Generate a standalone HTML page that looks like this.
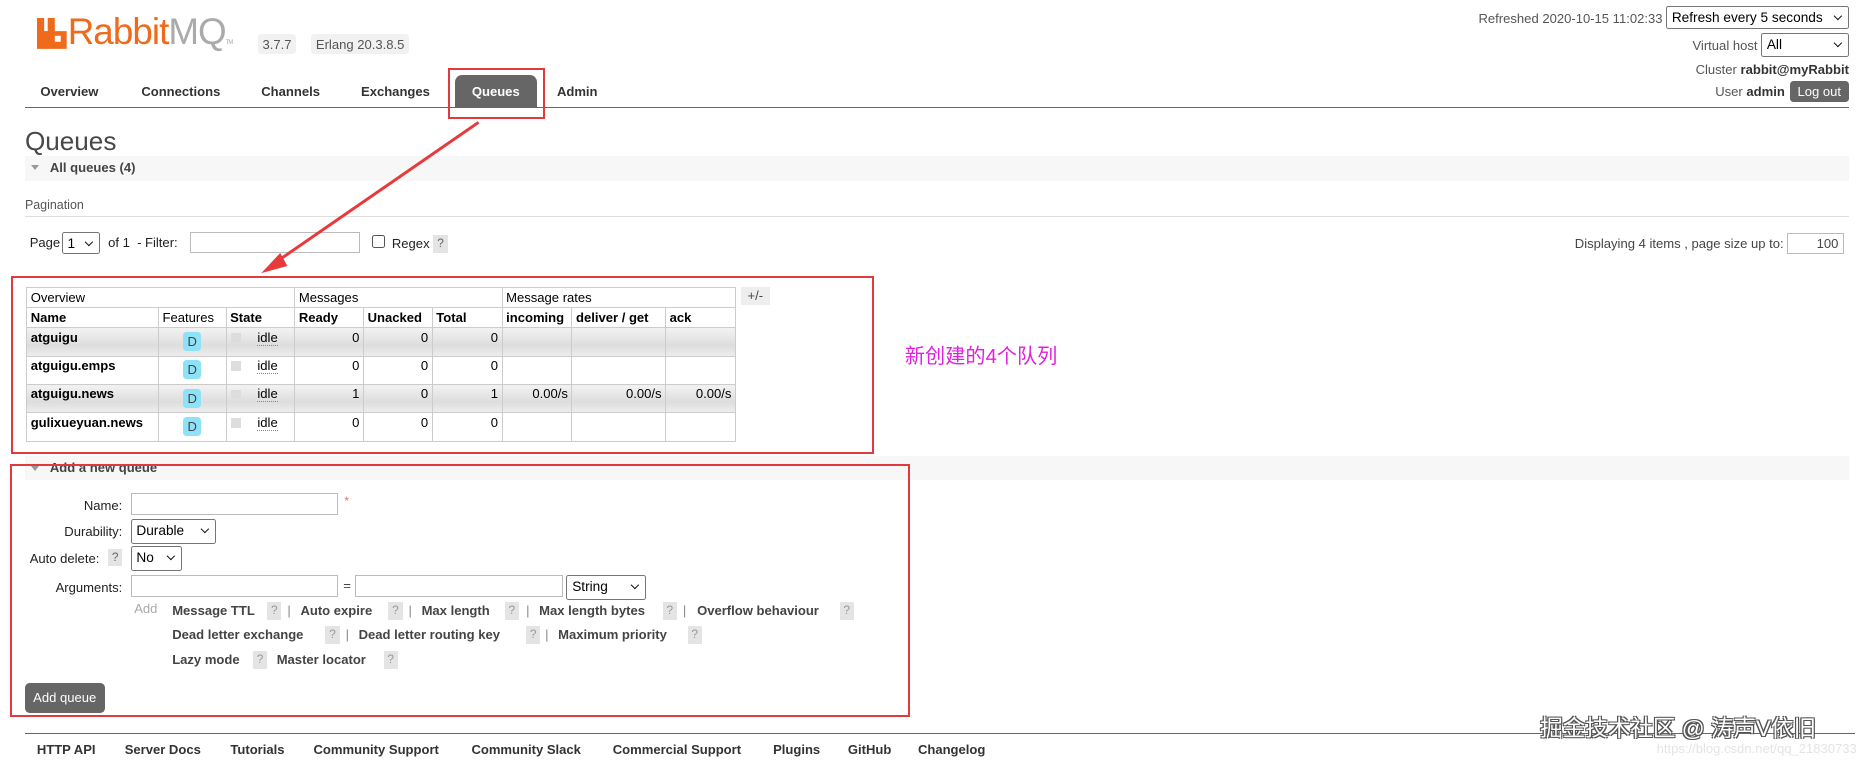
<!DOCTYPE html>
<html><head><meta charset="utf-8"><style>
html,body{margin:0;padding:0;background:#fff;overflow:hidden}
#w{zoom:1.1875;width:1568px;height:643px;position:relative;font-family:"Liberation Sans","Noto Sans CJK SC",sans-serif;font-size:11px;color:#444}
.a{position:absolute;white-space:nowrap}
.b{font-weight:bold}
.sel{position:absolute;border:1px solid #767676;border-radius:2px;background:#fff;color:#000;font-size:11.5px;box-sizing:border-box;padding:1px 4px;line-height:16px}
.sel:after{content:"";position:absolute;right:6px;top:5px;width:4px;height:4px;border-right:1.5px solid #000;border-bottom:1.5px solid #000;transform:rotate(45deg)}
.inp{position:absolute;border:1px solid #bbb;box-sizing:border-box;background:#fff}
.q{position:absolute;background:#e4e4e4;color:#999;font-size:10px;text-align:center;line-height:14px;width:12px;height:15px}
.rb{position:absolute;border:2px solid #e0393e;box-sizing:border-box}
table{position:absolute;left:22px;top:242px;border-collapse:collapse;font-size:11px}
td{border:1px solid #ccc;padding:1px 3px 0;height:15px;color:#000;vertical-align:top}
tr.d td{height:22px}
tr.g td{background:linear-gradient(#f2f2f2,#ddd 60%,#eee)}
.r{text-align:right}
.D{display:inline-block;background:#8ee2f8;border-radius:3px;width:15px;height:16px;text-align:center;line-height:17px;margin-top:2px;color:#444}
.sq{display:inline-block;width:8px;height:8px;background:#ddd;margin:3px 14px 0 1px;vertical-align:top}
.idle{border-bottom:1px dotted #888}
.nav{position:absolute;top:71px;font-weight:bold;color:#333;font-size:11px}
.ft{position:absolute;top:625px;font-weight:bold;color:#333;font-size:11px}
.lk{position:absolute;font-weight:bold;color:#444;font-size:11px}
.pipe{position:absolute;color:#888}
</style></head><body><div id="w">
<svg class="a" style="left:31px;top:15px" width="25" height="26" viewBox="0 0 25 26"><path d="M0 0h6v11h3V0h6v11h10v15H0z" fill="#f06a1c"/><rect x="15" y="15" width="5" height="5" fill="#fff"/></svg>
<div class="a" style="left:57px;top:9px;font-size:31px;color:#f06a1c;letter-spacing:-0.8px">Rabbit<span style="color:#aaa">MQ</span><span style="font-size:5px;color:#aaa">TM</span></div>
<div class="a" style="left:217px;top:29px;background:#f1f1f1;padding:2px 4px;border-radius:3px;color:#555">3.7.7</div>
<div class="a" style="left:262px;top:29px;background:#f1f1f1;padding:2px 4px;border-radius:3px;color:#555">Erlang 20.3.8.5</div>
<div class="nav" style="left:34px">Overview</div>
<div class="nav" style="left:119px">Connections</div>
<div class="nav" style="left:220px">Channels</div>
<div class="nav" style="left:304px">Exchanges</div>
<div class="a" style="left:383px;top:63px;width:69px;height:27px;background:#666;border-radius:6px 6px 0 0;color:#fff;font-weight:bold;text-align:center;line-height:28px">Queues</div>
<div class="nav" style="left:469px">Admin</div>
<div class="a" style="left:21px;top:90px;width:1536px;height:1px;background:#666"></div>
<div class="rb" style="left:377px;top:57px;width:82px;height:43px"></div>
<div class="a" style="right:168px;top:9px;color:#555">Refreshed 2020-10-15 11:02:33</div>
<div class="sel" style="left:1403px;top:5px;width:154px;height:19px">Refresh every 5 seconds</div>
<div class="a" style="right:88px;top:32px;color:#555">Virtual host</div>
<div class="sel" style="left:1483px;top:28px;width:74px;height:20px">All</div>
<div class="a" style="right:11px;top:52px;color:#555">Cluster <b style="color:#333">rabbit@myRabbit</b></div>
<div class="a" style="right:65px;top:71px;color:#555">User <b style="color:#333">admin</b></div>
<div class="a" style="left:1507px;top:68px;width:50px;height:18px;background:#666;color:#fff;border-radius:3px;text-align:center;line-height:18px">Log out</div>
<div class="a" style="left:21px;top:106px;font-size:22px;color:#484848">Queues</div>
<div class="a" style="left:21px;top:131px;width:1536px;height:21px;background:#f7f7f7"></div>
<div class="a" style="left:26px;top:139px;width:0;height:0;border-left:4px solid transparent;border-right:4px solid transparent;border-top:5px solid #999"></div>
<div class="a b" style="left:42px;top:135px;color:#444">All queues (4)</div>
<div class="a" style="left:21px;top:167px;color:#555;font-size:10.5px">Pagination</div>
<div class="a" style="left:21px;top:182px;width:1536px;height:1px;background:#ddd"></div>
<div class="a" style="left:25px;top:198px;color:#222">Page</div>
<div class="sel" style="left:52px;top:195px;width:32px;height:19px">1</div>
<div class="a" style="left:91px;top:198px;color:#222">of 1 &nbsp;- Filter:</div>
<div class="inp" style="left:160px;top:195px;width:143px;height:18px"></div>
<div class="a" style="left:313px;top:198px;width:11px;height:11px;border:1px solid #555;border-radius:2px;box-sizing:border-box"></div>
<div class="a" style="left:330px;top:199px;color:#222">Regex</div>
<div class="q" style="left:365px;top:198px;color:#666">?</div>
<div class="a" style="right:66px;top:199px;color:#444">Displaying 4 items , page size up to:</div>
<div class="inp" style="left:1505px;top:196px;width:48px;height:18px;text-align:right;padding-right:4px;line-height:16px;color:#444">100</div>
<table>
<tr><td colspan="3" style="width:219px">Overview</td><td colspan="3">Messages</td><td colspan="3">Message rates</td></tr>
<tr class="b"><td style="width:104px">Name</td><td style="width:50px;font-weight:normal">Features</td><td style="width:51px">State</td><td style="width:51px">Ready</td><td style="width:51px">Unacked</td><td style="width:52px">Total</td><td style="width:52px">incoming</td><td style="width:72px">deliver / get</td><td style="width:52px">ack</td></tr>
<tr class="d g"><td class="b">atguigu</td><td style="text-align:center"><span class="D">D</span></td><td><span class="sq"></span><span class="idle">idle</span></td><td class="r">0</td><td class="r">0</td><td class="r">0</td><td></td><td></td><td></td></tr>
<tr class="d"><td class="b">atguigu.emps</td><td style="text-align:center"><span class="D">D</span></td><td><span class="sq"></span><span class="idle">idle</span></td><td class="r">0</td><td class="r">0</td><td class="r">0</td><td></td><td></td><td></td></tr>
<tr class="d g"><td class="b">atguigu.news</td><td style="text-align:center"><span class="D">D</span></td><td><span class="sq"></span><span class="idle">idle</span></td><td class="r">1</td><td class="r">0</td><td class="r">1</td><td class="r">0.00/s</td><td class="r">0.00/s</td><td class="r">0.00/s</td></tr>
<tr class="d"><td class="b">gulixueyuan.news</td><td style="text-align:center"><span class="D">D</span></td><td><span class="sq"></span><span class="idle">idle</span></td><td class="r">0</td><td class="r">0</td><td class="r">0</td><td></td><td></td><td></td></tr>
</table>
<div class="a" style="left:624px;top:242px;width:24px;height:15px;background:#eee;text-align:center;line-height:15px;color:#444">+/-</div>
<div class="rb" style="left:9px;top:232px;width:727px;height:150px"></div>
<div class="a" style="left:762px;top:286px;font-size:17px;color:#e020e0">新创建的4个队列</div>
<svg class="a" style="left:0;top:0" width="500" height="240"><line x1="403" y1="103" x2="232" y2="221" stroke="#e83a3a" stroke-width="2.5"/><polygon points="220,230 236,213 242,224" fill="#e83a3a"/></svg>
<div class="a" style="left:21px;top:384px;width:1536px;height:20px;background:#f7f7f7"></div>
<div class="a" style="left:26px;top:392px;width:0;height:0;border-left:4px solid transparent;border-right:4px solid transparent;border-top:5px solid #999"></div>
<div class="a b" style="left:42px;top:387px;color:#444">Add a new queue</div>
<div class="rb" style="left:8px;top:391px;width:758px;height:213px"></div>
<div class="a" style="right:1465px;top:419px;color:#222">Name:</div>
<div class="inp" style="left:110px;top:415px;width:175px;height:19px"></div>
<div class="a" style="left:290px;top:416px;color:#e07070;font-size:10px">*</div>
<div class="a" style="right:1465px;top:441px;color:#222">Durability:</div>
<div class="sel" style="left:110px;top:437px;width:72px;height:21px;line-height:17px">Durable</div>
<div class="a" style="left:25px;top:464px;color:#222">Auto delete:</div>
<div class="q" style="left:91px;top:462px;color:#666">?</div>
<div class="sel" style="left:110px;top:460px;width:43px;height:21px;line-height:17px">No</div>
<div class="a" style="right:1465px;top:488px;color:#222">Arguments:</div>
<div class="inp" style="left:110px;top:484px;width:175px;height:19px"></div>
<div class="a" style="left:289px;top:487px;color:#444">=</div>
<div class="inp" style="left:299px;top:484px;width:175px;height:19px"></div>
<div class="sel" style="left:477px;top:484px;width:67px;height:21px;line-height:17px">String</div>
<div class="a" style="left:113px;top:506px;color:#aaa">Add</div>
<div class="lk" style="left:145px;top:508px">Message TTL</div><div class="q" style="left:225px;top:507px">?</div><div class="pipe" style="left:242px;top:508px">|</div>
<div class="lk" style="left:253px;top:508px">Auto expire</div><div class="q" style="left:327px;top:507px">?</div><div class="pipe" style="left:344px;top:508px">|</div>
<div class="lk" style="left:355px;top:508px">Max length</div><div class="q" style="left:425px;top:507px">?</div><div class="pipe" style="left:443px;top:508px">|</div>
<div class="lk" style="left:454px;top:508px">Max length bytes</div><div class="q" style="left:558px;top:507px">?</div><div class="pipe" style="left:575px;top:508px">|</div>
<div class="lk" style="left:587px;top:508px">Overflow behaviour</div><div class="q" style="left:707px;top:507px">?</div>
<div class="lk" style="left:145px;top:528px">Dead letter exchange</div><div class="q" style="left:274px;top:527px">?</div><div class="pipe" style="left:291px;top:528px">|</div>
<div class="lk" style="left:302px;top:528px">Dead letter routing key</div><div class="q" style="left:443px;top:527px">?</div><div class="pipe" style="left:459px;top:528px">|</div>
<div class="lk" style="left:470px;top:528px">Maximum priority</div><div class="q" style="left:579px;top:527px">?</div>
<div class="lk" style="left:145px;top:549px">Lazy mode</div><div class="q" style="left:213px;top:548px">?</div>
<div class="lk" style="left:233px;top:549px">Master locator</div><div class="q" style="left:323px;top:548px">?</div>
<div class="a" style="left:21px;top:575px;width:67px;height:25px;background:#666;color:#fff;border-radius:4px;text-align:center;line-height:25px">Add queue</div>
<div class="a" style="left:21px;top:617px;width:1541px;height:1px;background:#666"></div>
<div class="ft" style="left:31px">HTTP API</div>
<div class="ft" style="left:105px">Server Docs</div>
<div class="ft" style="left:194px">Tutorials</div>
<div class="ft" style="left:264px">Community Support</div>
<div class="ft" style="left:397px">Community Slack</div>
<div class="ft" style="left:516px">Commercial Support</div>
<div class="ft" style="left:651px">Plugins</div>
<div class="ft" style="left:714px">GitHub</div>
<div class="ft" style="left:773px">Changelog</div>
<div class="a" style="left:1297px;top:599px;font-size:19px;color:#fff;text-shadow:1px 1px 0 #555,-1px -1px 0 #555,1px -1px 0 #555,-1px 1px 0 #555">掘金技术社区 @ 涛声V依旧</div>
<div class="a" style="left:1395px;top:624px;font-size:11px;color:#e4e4e4">https://blog.csdn.net/qq_21830733</div>
</div></body></html>
